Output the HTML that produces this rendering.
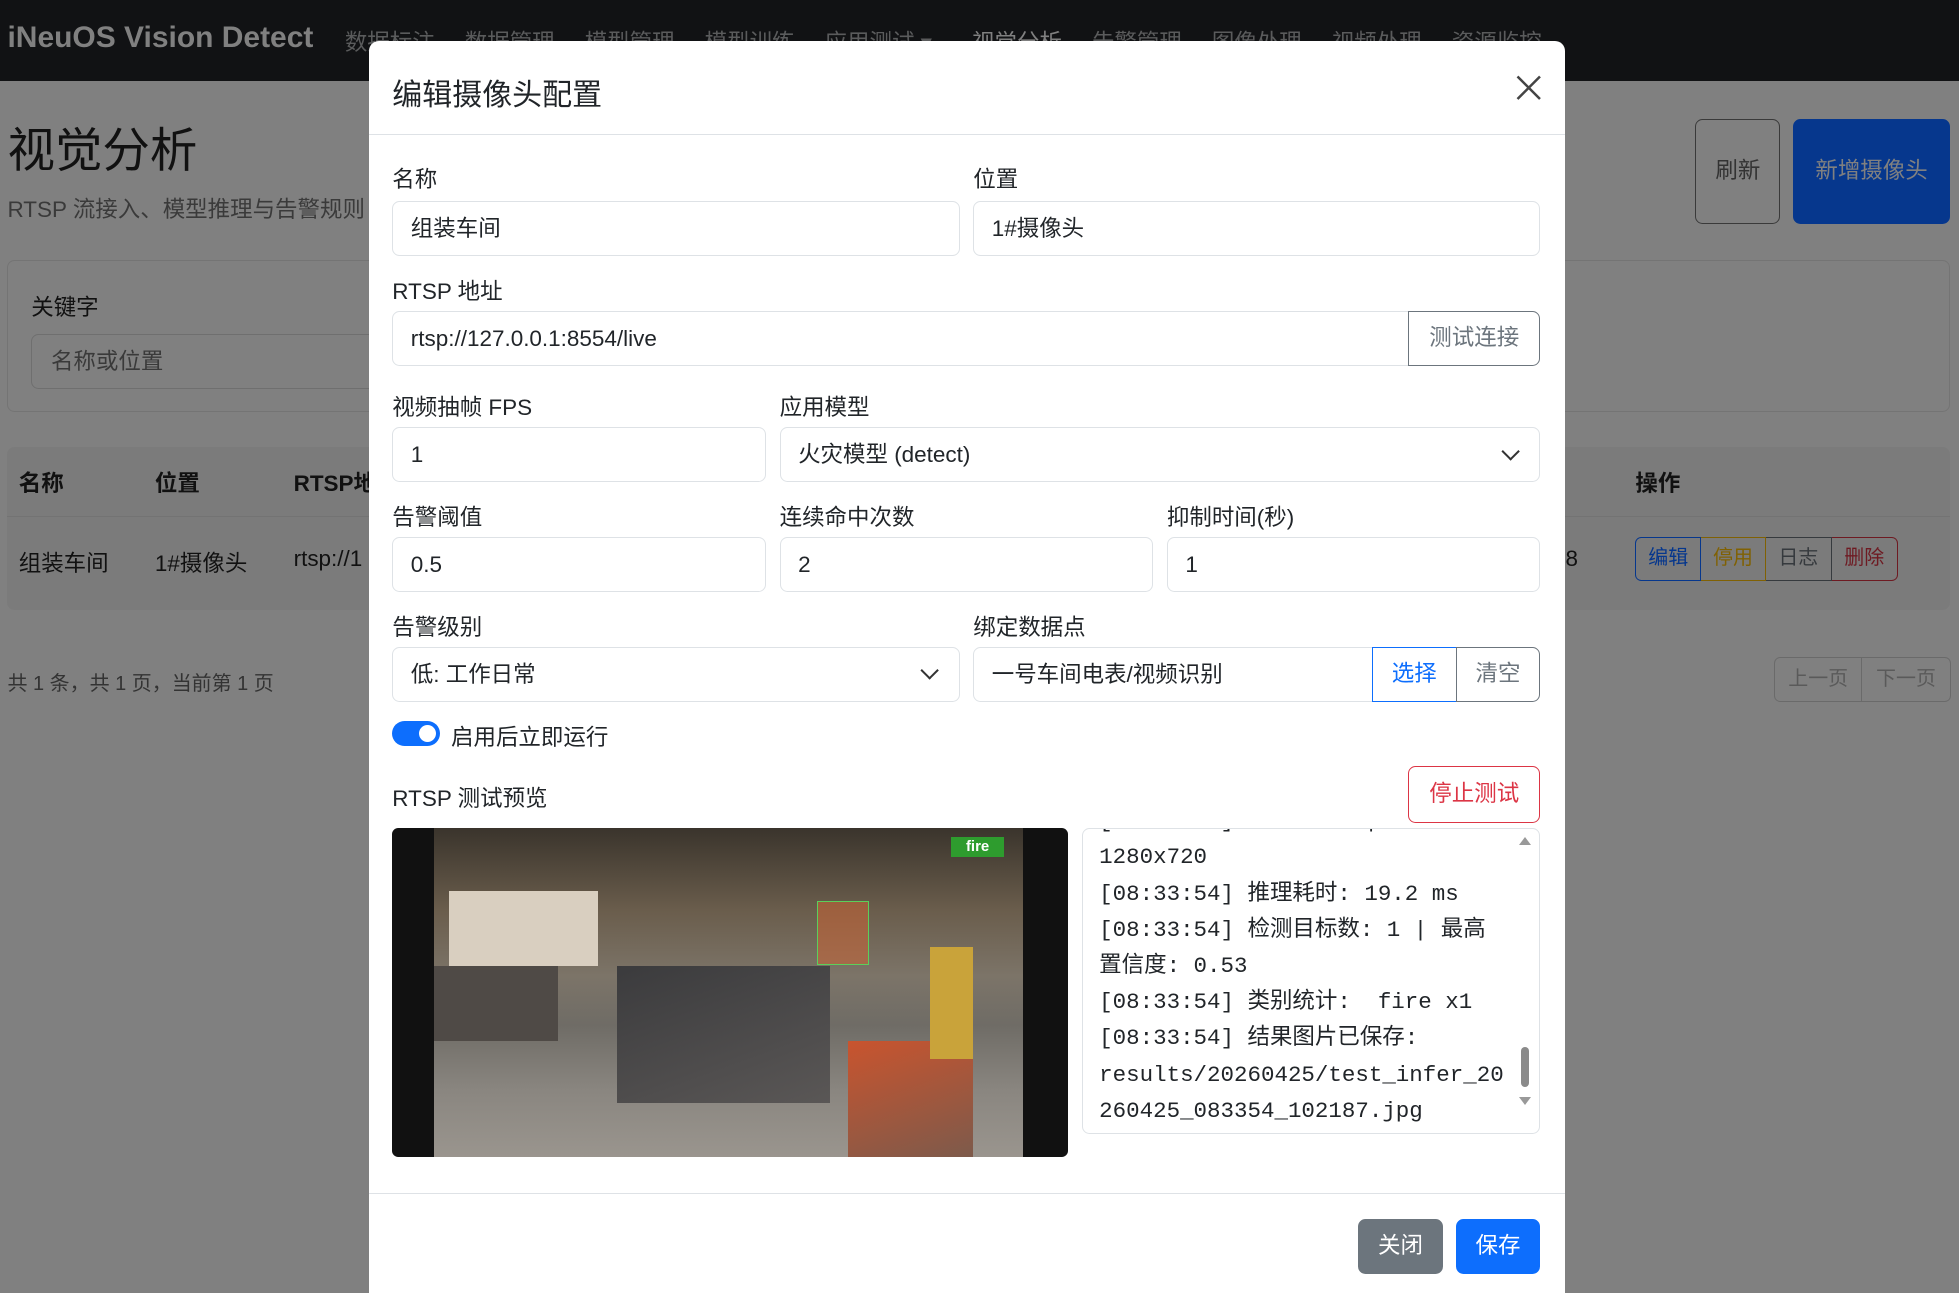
<!DOCTYPE html>
<html><head><meta charset="utf-8">
<style>
html,body{margin:0;padding:0;width:1959px;height:1293px;overflow:hidden;background:#808080}
#w{position:relative;width:1568px;height:1035px;zoom:1.24936;font-family:"Liberation Sans","Noto Sans CJK SC",sans-serif;color:#111;overflow:hidden;background:#808080}
.a{position:absolute;white-space:nowrap}
.nav{left:0;top:0;width:1568px;height:65px;background:#111214}
.ni{top:20px;font-size:18px;color:#5a5b5c}
.modal{left:295px;top:33px;width:958px;height:1010px;background:#fff;border-radius:8px}
.lbl{font-size:18px;color:#212529}
.in{border:1px solid #dee2e6;border-radius:6px;height:42px;background:#fff;box-sizing:border-box;font-size:18px;color:#212529;padding:0 14px;line-height:42px}
.chev{position:absolute;right:18px;top:13px;width:9px;height:9px;border-right:2px solid #333;border-bottom:2px solid #333;transform:rotate(45deg)}
.mono{font-family:"Liberation Mono","Noto Sans CJK SC",monospace}
</style></head><body><div id="w">
<div class="a nav"></div>
<div class="a" style="left:6px;top:17px;font-size:24px;font-weight:bold;color:#808080">iNeuOS Vision Detect</div>
<div class="a ni" style="left:276px">数据标注</div>
<div class="a ni" style="left:372px">数据管理</div>
<div class="a ni" style="left:468px">模型管理</div>
<div class="a ni" style="left:564px">模型训练</div>
<div class="a ni" style="left:660px">应用测试 ▾</div>
<div class="a ni" style="left:778px;color:#808080">视觉分析</div>
<div class="a ni" style="left:874px">告警管理</div>
<div class="a ni" style="left:970px">图像处理</div>
<div class="a ni" style="left:1066px">视频处理</div>
<div class="a ni" style="left:1162px">资源监控</div>
<div class="a" style="left:6px;top:90px;font-size:38px;color:#111">视觉分析</div>
<div class="a" style="left:6px;top:154px;font-size:18px;color:#3a3a3a">RTSP 流接入、模型推理与告警规则</div>
<div class="a" style="left:1357px;top:95px;width:68px;height:84px;border:1px solid #3a3a3a;border-radius:6px;box-sizing:border-box;font-size:18px;color:#333;text-align:center;line-height:82px">刷新</div>
<div class="a" style="left:1435px;top:95px;width:126px;height:84px;background:#06378d;border-radius:6px;font-size:18px;color:#808080;text-align:center;line-height:84px">新增摄像头</div>
<div class="a" style="left:6px;top:208px;width:1555px;height:122px;border:1px solid #747474;border-radius:6px;box-sizing:border-box"></div>
<div class="a" style="left:25px;top:232px;font-size:18px;color:#111">关键字</div>
<div class="a" style="left:25px;top:267px;width:300px;height:44px;border:1px solid #6f6f6f;border-radius:6px;font-size:18px;color:#3a3a3a;line-height:44px;padding-left:15px;box-sizing:border-box">名称或位置</div>
<div class="a" style="left:6px;top:358px;width:1555px;height:130px;background:#7b7b7b;border-radius:6px"></div>
<div class="a" style="left:6px;top:413px;width:1555px;height:1px;background:#737373"></div>
<div class="a" style="left:15px;top:373px;font-size:18px;font-weight:bold">名称</div>
<div class="a" style="left:124px;top:373px;font-size:18px;font-weight:bold">位置</div>
<div class="a" style="left:235px;top:373px;font-size:18px;font-weight:bold">RTSP地</div>
<div class="a" style="left:1309px;top:373px;font-size:18px;font-weight:bold">操作</div>
<div class="a" style="left:15px;top:437px;font-size:18px">组装车间</div>
<div class="a" style="left:124px;top:437px;font-size:18px">1#摄像头</div>
<div class="a" style="left:235px;top:437px;font-size:18px">rtsp://1</div>
<div class="a" style="left:1253px;top:437px;font-size:18px">8</div>
<div class="a" style="left:1309px;top:430px;height:35px;display:flex;font-size:16px;line-height:33px">
<div style="width:51px;border:1px solid #06378d;color:#06378d;border-radius:5px 0 0 5px;text-align:center">编辑</div>
<div style="width:51px;border:1px solid #806103;border-left:0;color:#806103;text-align:center">停用</div>
<div style="width:52px;border:1px solid #363a3e;border-left:0;color:#363a3e;text-align:center">日志</div>
<div style="width:52px;border:1px solid #6e1a22;border-left:0;color:#6e1a22;border-radius:0 5px 5px 0;text-align:center">删除</div></div>
<div class="a" style="left:6px;top:534px;font-size:16px;color:#333">共 1 条，共 1 页，当前第 1 页</div>
<div class="a" style="left:1420px;top:526px;height:36px;display:flex;font-size:16px;line-height:34px;color:#5a5a5a">
<div style="width:69px;border:1px solid #6a6a6a;border-radius:5px 0 0 5px;text-align:center">上一页</div>
<div style="width:70px;border:1px solid #6a6a6a;border-left:0;border-radius:0 5px 5px 0;text-align:center">下一页</div></div>
<div class="a modal"></div>
<div class="a" style="left:314px;top:56px;font-size:24px;color:#212529">编辑摄像头配置</div>
<svg class="a" style="left:1213px;top:59px" width="22" height="22" viewBox="0 0 22 22"><path d="M2 2L20 20M20 2L2 20" stroke="#444" stroke-width="2"/></svg>
<div class="a" style="left:295px;top:107px;width:958px;height:1px;background:#dee2e6"></div>
<div class="a lbl" style="left:314px;top:130px">名称</div>
<div class="a lbl" style="left:779px;top:130px">位置</div>
<div class="a in" style="left:314px;top:161px;width:454px;height:44px;line-height:44px">组装车间</div>
<div class="a in" style="left:779px;top:161px;width:454px;height:44px;line-height:44px">1#摄像头</div>
<div class="a lbl" style="left:314px;top:219px">RTSP 地址</div>
<div class="a in" style="left:314px;top:249px;width:814px;height:44px;line-height:44px;border-radius:6px 0 0 6px">rtsp://127.0.0.1:8554/live</div>
<div class="a" style="left:1127px;top:249px;width:106px;height:44px;border:1px solid #6c757d;border-radius:0 6px 6px 0;box-sizing:border-box;font-size:18px;color:#6c757d;text-align:center;line-height:42px">测试连接</div>
<div class="a lbl" style="left:314px;top:312px">视频抽帧 FPS</div>
<div class="a lbl" style="left:624px;top:312px">应用模型</div>
<div class="a in" style="left:314px;top:342px;width:299px;height:44px;line-height:44px">1</div>
<div class="a in" style="left:624px;top:342px;width:609px;height:44px;line-height:44px">火灾模型 (detect)<span class="chev"></span></div>
<div class="a lbl" style="left:314px;top:400px">告警阈值</div>
<div class="a lbl" style="left:624px;top:400px">连续命中次数</div>
<div class="a lbl" style="left:934px;top:400px">抑制时间(秒)</div>
<div class="a in" style="left:314px;top:430px;width:299px;height:44px;line-height:44px">0.5</div>
<div class="a in" style="left:624px;top:430px;width:299px;height:44px;line-height:44px">2</div>
<div class="a in" style="left:934px;top:430px;width:299px;height:44px;line-height:44px">1</div>
<div class="a lbl" style="left:314px;top:488px">告警级别</div>
<div class="a lbl" style="left:779px;top:488px">绑定数据点</div>
<div class="a in" style="left:314px;top:518px;width:454px;height:44px;line-height:44px">低: 工作日常<span class="chev"></span></div>
<div class="a in" style="left:779px;top:518px;width:320px;height:44px;line-height:44px;border-radius:6px 0 0 6px">一号车间电表/视频识别</div>
<div class="a" style="left:1098px;top:518px;width:68px;height:44px;border:1px solid #0d6efd;box-sizing:border-box;font-size:18px;color:#0d6efd;text-align:center;line-height:42px">选择</div>
<div class="a" style="left:1165px;top:518px;width:68px;height:44px;border:1px solid #6c757d;border-radius:0 6px 6px 0;box-sizing:border-box;font-size:18px;color:#6c757d;text-align:center;line-height:42px">清空</div>
<div class="a" style="left:314px;top:577px;width:38px;height:20px;border-radius:10px;background:#0d6efd"></div>
<div class="a" style="left:335px;top:580px;width:14px;height:14px;border-radius:7px;background:#fff"></div>
<div class="a lbl" style="left:361px;top:576px">启用后立即运行</div>
<div class="a lbl" style="left:314px;top:625px">RTSP 测试预览</div>
<div class="a" style="left:1127px;top:613px;width:106px;height:46px;border:1px solid #dc3545;border-radius:6px;box-sizing:border-box;font-size:18px;color:#dc3545;text-align:center;line-height:44px">停止测试</div>
<div class="a" style="left:314px;top:663px;width:541px;height:263px;background:#111;border-radius:5px;overflow:hidden">
 <div style="position:absolute;left:33px;top:0;width:472px;height:263px;background:linear-gradient(180deg,#3a342c 0%,#6a5d4c 25%,#7c7468 45%,#6f6c66 60%,#8a8680 80%,#9a958e 100%)"></div>
 <div style="position:absolute;left:45px;top:50px;width:120px;height:60px;background:#d9cfc0"></div>
 <div style="position:absolute;left:33px;top:110px;width:100px;height:60px;background:#4f4a46"></div>
 <div style="position:absolute;left:180px;top:110px;width:170px;height:110px;background:linear-gradient(160deg,#3b3b3d,#5a5756)"></div>
 <div style="position:absolute;left:365px;top:170px;width:100px;height:93px;background:linear-gradient(160deg,#c9542e,#7d5a4b)"></div>
 <div style="position:absolute;left:430px;top:95px;width:35px;height:90px;background:#c9a33a"></div>
 <div style="position:absolute;left:340px;top:58px;width:40px;height:50px;border:1px solid #5bd05b;background:rgba(210,100,50,.5)"></div>
 <div style="position:absolute;left:447px;top:7px;width:43px;height:16px;background:#2e9c2e;color:#fff;font-size:12px;text-align:center;line-height:16px;font-weight:bold">fire</div>
</div>
<div class="a mono" style="left:866px;top:663px;width:367px;height:245px;border:1px solid #dee2e6;border-radius:6px;box-sizing:border-box;overflow:hidden;font-size:18px;line-height:29px;color:#212529">
 <div style="position:absolute;left:13px;top:-21px;white-space:pre">[08:33:54] 输入尺寸: |
1280x720
[08:33:54] 推理耗时: 19.2 ms
[08:33:54] 检测目标数: 1 | 最高
置信度: 0.53
[08:33:54] 类别统计:  fire x1
[08:33:54] 结果图片已保存:
results/20260425/test_infer_20
260425_083354_102187.jpg</div>
 <div style="position:absolute;right:8px;top:174px;width:7px;height:32px;background:#8a8a8a;border-radius:4px"></div>
 <div style="position:absolute;right:7px;top:6px;width:0;height:0;border-left:5px solid transparent;border-right:5px solid transparent;border-bottom:7px solid #999"></div>
 <div style="position:absolute;right:7px;top:214px;width:0;height:0;border-left:5px solid transparent;border-right:5px solid transparent;border-top:7px solid #999"></div>
</div>
<div class="a" style="left:295px;top:955px;width:958px;height:1px;background:#dee2e6"></div>
<div class="a" style="left:1087px;top:976px;width:68px;height:44px;background:#6c757d;border-radius:6px;color:#fff;font-size:18px;text-align:center;line-height:44px">关闭</div>
<div class="a" style="left:1165px;top:976px;width:68px;height:44px;background:#0d6efd;border-radius:6px;color:#fff;font-size:18px;text-align:center;line-height:44px">保存</div>
</div></body></html>
